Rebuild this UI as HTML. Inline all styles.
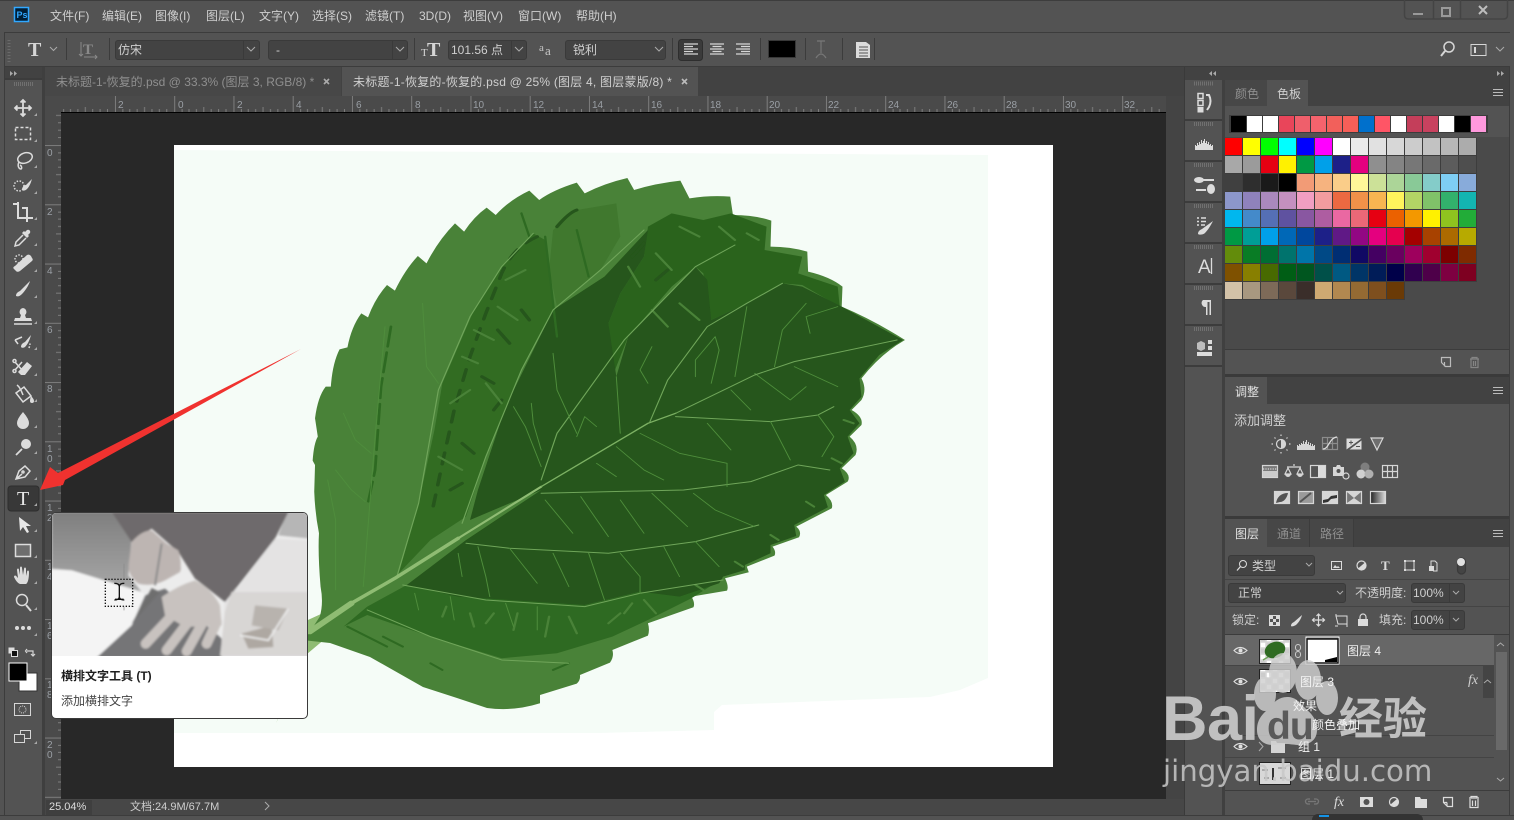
<!DOCTYPE html>
<html><head><meta charset="utf-8"><title>Photoshop</title>
<style>
html,body{margin:0;padding:0;width:1514px;height:820px;overflow:hidden;background:#535353}
.a{position:absolute}
.t{position:absolute;white-space:nowrap;font:12px/14px "Liberation Sans","Noto Sans CJK SC",sans-serif;color:#cfcfcf}
.d{color:#8f8f8f}
.b{position:absolute;box-sizing:border-box;background:#434343;border:1px solid #3a3a3a;border-radius:3px}
svg{position:absolute;left:0;top:0}
#g{position:absolute;left:1225px;top:138px;display:grid;grid-template-columns:repeat(14,18px);grid-auto-rows:18px}
#g i{display:block;box-sizing:border-box;border-right:1px solid #3d3d3d;border-bottom:1px solid #3d3d3d}
#r{position:absolute;left:1229px;top:115px;width:259px;height:18px;background:#3c3c3c;display:flex;padding-left:2px;box-sizing:border-box}
#r i{display:block;width:15px;height:16px;margin:1px 1px 0 0}
#tip{position:absolute;left:51px;top:512px;width:255px;height:205px;background:#fff;border:1px solid #3a3a3a;border-radius:5px;overflow:hidden}
</style></head><body>

<!-- chrome backgrounds -->
<div class="a" style="left:0;top:0;width:1514px;height:1px;background:#3d3d3d"></div>
<div class="a" style="left:4px;top:32px;width:1506px;height:1px;background:#3c3c3c"></div>
<div class="a" style="left:4px;top:66px;width:1506px;height:1px;background:#3c3c3c"></div>
<div class="a" style="left:4px;top:32px;width:1px;height:783px;background:#3c3c3c"></div>
<div class="a" style="left:42px;top:67px;width:3px;height:748px;background:#3f3f3f"></div>
<div class="a" style="left:5px;top:67px;width:37px;height:12px;background:#424242"></div>
<div class="a" style="left:45px;top:67px;width:1139px;height:29px;background:#424242"></div>
<div class="a" style="left:45px;top:67px;width:296px;height:29px;background:#474747"></div>
<div class="a" style="left:342px;top:67px;width:356px;height:29px;background:#535353"></div>
<div class="a" style="left:45px;top:96px;width:1121px;height:16px;background:#4a4a4a"></div>
<div class="a" style="left:45px;top:96px;width:16px;height:703px;background:#4a4a4a"></div>
<div class="a" style="left:61px;top:112px;width:1105px;height:687px;background:#282828"></div>
<div class="a" style="left:61px;top:112px;width:1105px;height:1px;background:#000"></div>
<div class="a" style="left:1166px;top:96px;width:18px;height:703px;background:#444"></div>
<div class="a" style="left:45px;top:799px;width:1139px;height:16px;background:#474747"></div>
<div class="a" style="left:46px;top:800px;width:46px;height:15px;background:#3f3f3f"></div>
<div class="a" style="left:0;top:815px;width:1514px;height:1px;background:#3c3c3c"></div>
<div class="a" style="left:1184px;top:67px;width:1px;height:748px;background:#3a3a3a"></div>
<div class="a" style="left:1185px;top:67px;width:325px;height:13px;background:#424242"></div>
<div class="a" style="left:1222px;top:80px;width:3px;height:735px;background:#404040"></div>
<div class="a" style="left:1509px;top:67px;width:1px;height:748px;background:#3c3c3c"></div>

<!-- panels -->
<div class="a" style="left:1225px;top:80px;width:284px;height:26px;background:#424242"></div>
<div class="a" style="left:1225px;top:80px;width:42px;height:26px;background:#474747"></div>
<div class="a" style="left:1267px;top:80px;width:41px;height:27px;background:#535353"></div>
<div class="a" style="left:1225px;top:106px;width:284px;height:31px;background:#535353"></div>
<div class="a" style="left:1225px;top:137px;width:284px;height:212px;background:#4a4a4a"></div>
<div class="a" style="left:1225px;top:349px;width:284px;height:1px;background:#3c3c3c"></div>
<div class="a" style="left:1225px;top:374px;width:284px;height:3px;background:#3a3a3a"></div>
<div class="a" style="left:1225px;top:377px;width:284px;height:27px;background:#424242"></div>
<div class="a" style="left:1225px;top:377px;width:42px;height:28px;background:#535353"></div>
<div class="a" style="left:1225px;top:516px;width:284px;height:3px;background:#3a3a3a"></div>
<div class="a" style="left:1225px;top:519px;width:284px;height:28px;background:#424242"></div>
<div class="a" style="left:1225px;top:519px;width:42px;height:29px;background:#535353"></div>
<div class="a" style="left:1267px;top:519px;width:86px;height:28px;background:#474747"></div>
<div class="a" style="left:1309px;top:519px;width:1px;height:28px;background:#3c3c3c"></div>
<div class="a" style="left:1353px;top:519px;width:1px;height:28px;background:#3c3c3c"></div>
<div class="a" style="left:1225px;top:579px;width:284px;height:1px;background:#444"></div>
<div class="a" style="left:1225px;top:606px;width:284px;height:1px;background:#444"></div>
<div class="a" style="left:1225px;top:634px;width:284px;height:1px;background:#3c3c3c"></div>
<div class="a" style="left:1225px;top:635px;width:269px;height:30px;background:#676767"></div>
<div class="a" style="left:1225px;top:665px;width:269px;height:1px;background:#444"></div>
<div class="a" style="left:1225px;top:735px;width:269px;height:1px;background:#444"></div>
<div class="a" style="left:1225px;top:757px;width:269px;height:1px;background:#444"></div>
<div class="a" style="left:1225px;top:790px;width:284px;height:1px;background:#3c3c3c"></div>
<div class="a" style="left:1483px;top:666px;width:11px;height:32px;background:#444"></div>
<div class="a" style="left:1496px;top:652px;width:11px;height:98px;background:#696969"></div>
<div class="a" style="left:1312px;top:814px;width:111px;height:6px;background:#333;border-radius:6px 6px 0 0"></div>
<div class="a" style="left:1319px;top:815px;width:10px;height:2px;background:#1593e6"></div>

<!-- document + leaf -->
<div class="a" style="left:174px;top:145px;width:879px;height:622px;background:#fff"></div>
<svg width="1514" height="820" viewBox="0 0 1514 820">
<defs><filter id="lf" x="-5%" y="-5%" width="110%" height="110%"><feGaussianBlur stdDeviation=".5"/></filter></defs>
<polygon fill="#f5fcf7" points="174,150 988,155 988,678 960,690 930,697 850,700 722,705 714,712 714,730 600,733 174,733"/>
<g transform="translate(300 170) scale(.3954 .3333)" filter="url(#lf)">
<path fill="#8fbc73" d="M-60,1660 L20,1350 L130,1290 L150,1320 L70,1400 L20,1450 L-30,1560z"/>
<path fill="#4a8238" d="M20,1395 L50,1340 Q60,1300 52,1250 Q45,1150 48,1090 Q38,1030 36,965 L38,885 L32,872 Q35,820 45,800 L38,745 Q45,680 65,650 L78,650 Q82,580 100,538 L120,532 Q130,470 155,430 L172,442 Q190,385 220,345 L240,362 Q265,300 298,258 L320,280 Q350,210 392,160 L415,185 Q440,140 472,113 L495,135 Q530,90 580,62 L605,90 Q640,60 700,38 L720,70 Q770,40 828,24 L845,60 Q900,40 962,32 L985,85 Q1040,75 1088,80 L1095,135 Q1150,135 1192,152 L1190,230 Q1240,230 1283,245 L1285,305 Q1340,320 1372,350 L1370,410 Q1450,450 1530,510 Q1470,550 1420,625 Q1435,660 1420,690 L1395,720 Q1425,740 1420,765 L1390,800 Q1415,825 1405,855 L1370,895 Q1395,915 1385,935 L1330,975 Q1350,995 1345,1015 L1255,1070 Q1270,1085 1262,1102 L1195,1130 Q1205,1145 1200,1157 L1130,1190 L1135,1207 L1075,1225 Q1085,1250 1080,1262 L990,1280 Q1000,1300 995,1312 L880,1360 Q885,1380 880,1397 L790,1440 Q795,1460 784,1478 L708,1515 Q710,1530 700,1541 L607,1575 L607,1600 Q540,1625 473,1614 L397,1584 L311,1551 L177,1461 L76,1419 L20,1412 Z"/>
<!-- mid tone patches -->
<polygon fill="#326c24" points="250,1210 300,1000 340,780 360,640 440,420 510,290 590,190 620,210 640,420 560,600 470,860 420,1040 330,1110"/>
<polygon fill="#3f782e" points="640,180 700,120 800,100 810,200 760,300 650,410 630,300"/>
<polygon fill="#2a641e" points="880,170 940,130 1020,150 1090,130 1180,170 1175,240 1270,260 1260,310 1360,350 1365,410 1270,345 1220,340 1130,400 1040,450 1020,310 1000,290 940,350 830,500 790,620 780,460 810,370 870,260"/>
<polygon fill="#2f6a22" points="110,1370 170,1310 270,1245 720,1305 860,1265 1070,1225 990,1285 880,1350 790,1400 650,1450 510,1465 330,1400 170,1335"/>
<!-- darkest -->
<polygon fill="#25561a" points="610,960 430,1050 450,960 520,710 640,420 770,320 880,180 870,260 810,370 780,460 800,620 830,500 1000,290 1030,330 1040,450 1130,400 1220,340 1270,350 1370,410 1525,510 1465,555 1415,625 1420,680 1390,720 1415,760 1385,800 1400,850 1365,895 1378,935 1325,975 1335,1012 1250,1065 1255,1098 1190,1125 1190,1150 1125,1185 1125,1200 1070,1220 1060,1240 960,1280 860,1265 720,1305 400,1280 270,1245 420,1110"/>
<!-- texture -->
<g fill="none" stroke="#25561a" stroke-width="9" stroke-linecap="round" stroke-linejoin="round">
<path stroke-dasharray="34 30" d="M600,200 Q540,230 510,310 L470,430 L430,560 L390,720 L360,880 L335,1020"/>
<path d="M700,120 Q680,128 650,170M500,480l30,40M460,620l30,20M410,820l30,30M380,960l30,-20M490,720l20,-30M560,420l20,30M840,260l30,-40M900,330l30,-30"/>
</g>
<g fill="none" stroke="#2f6b22" stroke-width="7" stroke-linecap="round" stroke-linejoin="round"><path stroke-dasharray="60 18" d="M230,470 L205,650 L190,900 L170,1010"/></g>
<g fill="none" stroke="#4a8238" stroke-width="6" stroke-linecap="round">
<path d="M410,560l40,20M440,480l50,30M380,700l50,-40M350,860l60,40M470,640l40,60M500,410l50,40M830,290l30,60M900,250l40,50M960,170l50,30M1060,170l40,40M1130,190l30,20M960,400l50,50M890,420l40,50M520,330l50,-30M900,1330l-30,-40M620,1400l10,-60M700,1390l-20,-50M540,1380l10,-50M440,1370l-10,-40M780,1360l30,-30M820,1330l20,-30M470,1360l20,-30M360,1340l10,-30M1020,1260l-20,-15M1120,1190l-20,-15M1210,1110l-20,-15M1300,1010l-20,-15M1370,880l-25,-15M1400,760l-25,-10"/></g>
<g fill="none" stroke="#2f6b22" stroke-width="6" stroke-linecap="round">
<path d="M620,200l30,300M700,180l30,140M560,130l20,70M120,1370l100,60M210,1400l50,30M330,1480l30,20M640,1500l40,-20"/></g>
<!-- veins -->
<g fill="none" stroke="#6fa55a" stroke-linecap="round" stroke-linejoin="round">
<path stroke-width="3" d="M245,1220 L300,1000 L350,660 L430,440 L510,290 L590,190"/>
<path stroke-width="3" d="M410,1060 L470,860 L560,600 L640,420 L760,300 L870,180"/>
<path stroke-width="3" d="M610,930 L650,790 L820,510 L1000,290 L1100,225"/>
<path stroke-width="3" d="M885,755 L930,630 L1030,470 L1130,400 L1220,340"/>
<path stroke-width="3" d="M950,740 L1190,755 L1310,735 L1350,710"/>
<path stroke-width="3" d="M610,970 L970,960 L1140,935 L1260,885 L1340,900"/>
<path stroke-width="3" d="M420,1120 L530,1135 L780,1150 L1000,1115 L1160,1065"/>
<path stroke-width="3" d="M260,1245 L470,1290 L720,1310 L860,1270 L1070,1230"/>
<path stroke-width="3" d="M170,1320 L330,1400 L510,1470 L680,1480"/>
<g stroke="#4f8d3c" stroke-width="2.500"><path d="M160,1250 L190,800 L215,470 M90,1260 L90,1050 L70,930 M110,730 L140,810 L180,850 M90,900 L130,960 L165,995 M310,400 L320,590 L350,640"/>
<path d="M610,890 L570,770 L540,710 M610,840 L590,760 L585,700 M700,800 L720,740 L750,770 M810,790 L800,620 M640,550 L650,660 L700,790 M880,640 L860,600 L890,530 M1000,620 L1000,570 L1050,500 M1040,640 L1060,540 L1050,500 M1100,620 L1130,410 M1200,590 L1220,480 L1280,400 M1290,490 L1280,440 L1360,410 M1150,610 L1240,690 L1280,650 M1250,590 L1360,650 M1090,660 L1140,720 M1190,755 L1240,870 M1310,735 L1350,800 L1320,860 M1030,760 L1090,840 M860,790 L960,850 L1080,880 L1080,950 M800,830 L870,900 L920,930 M750,880 L800,920 M620,990 L690,1090 M710,980 L780,1100 M810,990 L870,1090 M890,970 L980,1070 M995,970 L1050,1020 L1150,1070"/>
<path d="M450,1130 L470,1220 L480,1280 M530,1135 L600,1240 M640,1150 L680,1250 M730,1150 L770,1290 M810,1150 L860,1220 L860,1270 M920,1130 L960,1220 M1000,1115 L1060,1190 M400,1150 L410,1220 M290,1270 L300,1320 M380,1280 L390,1350 M520,1300 L540,1370 M600,1310 L600,1380"/></g>
<path stroke="#8fbc73" stroke-width="16" d="M25,1385 L130,1300"/>
<path stroke="#8fbc73" stroke-width="10" d="M130,1300 L240,1225 L400,1105"/>
<path stroke="#8fbc73" stroke-width="6" d="M400,1105 L610,950"/>
<path stroke="#7cb064" stroke-width="4" d="M610,950 L880,760 L950,730"/>
<path stroke="#6fa55a" stroke-width="3" d="M950,730 L1150,615 L1250,575 L1510,510"/>
</g>
</g>
</svg>

<!-- tool icons and panel icons -->
<svg width="1514" height="820" viewBox="0 0 1514 820" fill="none" stroke="#d6d6d6" stroke-width="1.5">
<rect x="14.500" y="7.500" width="14" height="14" fill="#001e36" stroke="#31a8ff"/>
<text x="16.500" y="18" font-family="Liberation Sans" font-size="9" font-weight="bold" fill="#31a8ff" stroke="none">Ps</text>
<path stroke="#444" d="M1404.500 0v15q0 4 4 4h95q4 0 4-4v-15M1433.500 0v19M1460.500 0v19"/>
<path stroke="#9a9a9a" stroke-width="2" d="M1413 14h10"/>
<rect x="1442" y="8" width="8" height="8" stroke="#9a9a9a" stroke-width="2"/>
<path stroke="#bdbdbd" stroke-width="2" d="M1479 6l8 8M1487 6l-8 8"/>
<path stroke="#6a6a6a" stroke-width="3" stroke-dasharray="1 2" d="M9 40v22"/>
<path stroke="#3c3c3c" stroke-width="1" d="M66.500 38v22M109.500 38v22M414.500 38v22M672.500 38v22M760.500 38v22M805.500 38v22M842.500 38v22M874.500 38v22"/>
<text x="28" y="56" font-family="Liberation Serif" font-weight="bold" font-size="20" fill="#d6d6d6" stroke="none">T</text>
<path stroke="#aaa" stroke-width="1" d="M50 47l3.500 3.500 3.500-3.500M1496 47l4 4 4-4"/>
<g stroke="#8a8a8a"><text x="83" y="54" font-family="Liberation Serif" font-size="15" font-weight="bold" fill="#8a8a8a" stroke="none">T</text><path stroke-width="1" d="M81 42v14M79 54l2 2 2-2M84 57h13M95 55l2 2-2 2"/></g>
<text x="427" y="56" font-family="Liberation Serif" font-size="20" font-weight="bold" fill="#d6d6d6" stroke="none">T</text>
<text x="421" y="56" font-family="Liberation Serif" font-size="11" fill="#d6d6d6" stroke="none">T</text>
<text x="539" y="51" font-family="Liberation Serif" font-size="11" fill="#c8c8c8" stroke="none">a</text><text x="545" y="55" font-family="Liberation Serif" font-size="13" fill="#c8c8c8" stroke="none">a</text>
<rect x="678.500" y="39.500" width="24" height="21" rx="3" fill="#3b3b3b" stroke="#2e2e2e" stroke-width="1"/>
<path stroke-width="1.200" d="M684 44h14M684 46.500h9M684 49h14M684 51.500h9M684 54h14M710 44h14M712.500 46.500h9M710 49h14M712.500 51.500h9M710 54h14M736 44h14M741 46.500h9M736 49h14M741 51.500h9M736 54h14"/>
<rect x="768.500" y="40.500" width="27" height="17" fill="#000" stroke="#383838" stroke-width="1"/>
<path stroke="#777" stroke-width="1.200" d="M817 41h8M821 41v12M816 58q5-8 10 0"/>
<path fill="#dcdcdc" stroke="none" d="M856 42h10l4 3v13h-14z"/><path stroke="#535353" stroke-width="1" d="M859 47h9M859 50h9M859 53h9M859 56h9"/>
<circle cx="1449" cy="47" r="5" stroke-width="1.500"/><path stroke-width="2" d="M1445 51l-4 5"/>
<rect x="1471" y="44.500" width="15" height="11" stroke-width="1"/><path stroke-width="2" d="M1475 47v6"/>
<g fill="#aaa" stroke="none"><path d="M10 71l3 2.500-3 2.500zM14 71l3 2.500-3 2.500zM1212 71l-3 2.500 3 2.500zM1216 71l-3 2.500 3 2.500zM1497 71l3 2.500-3 2.500zM1501 71l3 2.500-3 2.500z"/></g>
<path stroke="#707070" stroke-width="4" stroke-dasharray="1 1" d="M14 84h20M1194 83.500h20M1194 124h20M1194 165h20M1194 206h20M1194 247h20M1194 288h20M1194 329h20"/>
<path stroke="#3c3c3c" stroke-width="2" d="M1185 120h37M1185 161h37M1185 202h37M1185 243h37M1185 284h37M1185 325h37M1185 366h37M5 79h37"/>
<path stroke="#aaa" stroke-width="1.600" d="M324 79l5 5M329 79l-5 5"/><path stroke="#bbb" stroke-width="1.600" d="M682 79l5 5M687 79l-5 5"/>
<!-- TOOLS -->
<rect x="8" y="486" width="31" height="25" rx="3" fill="#383838" stroke="#2e2e2e" stroke-width="1"/>
<g stroke="#dcdcdc">
<path stroke-width="1.800" d="M23 100v16M15 108h16M20.500 102.500l2.500-2.500 2.500 2.500M20.500 113.500l2.500 2.500 2.500-2.500M17.500 105.500l-2.500 2.500 2.500 2.500M28.500 105.500l2.500 2.500-2.500 2.500"/>
<rect x="15.500" y="127.500" width="15" height="12" stroke-dasharray="3 2"/>
<ellipse cx="25" cy="158" rx="7.500" ry="5" transform="rotate(-20 25 158)"/><path d="M19 162c-2 4 0 7 2 7 1 0 1-3-1-4"/>
<circle cx="19" cy="186" r="5" stroke-dasharray="1.500 1.500"/>
<path fill="#dcdcdc" stroke="none" d="M22 190c0-3 2-5 4-5l6-6c-1 3-2 7-5 10-2 2-4 2-5 1z"/>
<path stroke-width="2" d="M13 204h5v14h13M22 208h5v14M18 204v-2M31 218h2"/>
<path fill="#dcdcdc" stroke="none" d="M25 232l2-2c2-1 4 1 3 3l-2 2 1 1-2 2-5-5 2-2z"/>
<path d="M23 235l-7 7-1 4 4-1 7-7"/>
<circle cx="19" cy="259" r="4" stroke-dasharray="1.500 1.500"/>
<path fill="#dcdcdc" stroke="none" d="M15 266l12-11c2-1 3 0 4 1l1 2c1 1 1 2 0 3l-12 10c-2 1-3 1-4 0l-2-2c-1-1-1-2 1-3z"/>
<path fill="#dcdcdc" stroke="none" d="M16 296c0-3 2-4 4-5l10-10c-1 4-5 10-8 13-2 2-4 3-6 2z"/>
<path fill="#dcdcdc" stroke="none" d="M23 308a4 4 0 0 1 2 7l1 3h5l1 3h-18l1-3h5l1-3a4 4 0 0 1 2-7z"/><path stroke-width="1.400" d="M14 324h18"/>
<path fill="#dcdcdc" stroke="none" d="M21 347c0-3 2-4 4-5l6-7c-1 4-3 9-6 12-2 1-3 1-4 0z"/><path d="M15 340l7-3M15 340l3 4"/><path stroke-dasharray="1.500 1.500" d="M29 348q1-3 1-5"/>
<path d="M15 362l7 8M22 362l-7 8"/><circle cx="14.500" cy="361" r="1.500"/><circle cx="14.500" cy="371" r="1.500"/>
<path fill="#dcdcdc" stroke="none" d="M27 362l5 4-7 9h-4l-3-3z"/>
<path d="M16 393l8-6 7 9-8 6z"/><path d="M17 385q3 2 6 10"/><path fill="#dcdcdc" stroke="none" d="M31 396q3 3 3 5a2 2 0 0 1-4 0q0-2 1-5z"/>
<path fill="#dcdcdc" stroke="none" d="M23 412q6 7 6 11a6 6 0 0 1-12 0q0-4 6-11z"/>
<circle cx="26" cy="444" r="5" fill="#dcdcdc" stroke="none"/><path stroke-width="1.800" d="M22 449l-6 6"/>
<path d="M16 479l3-8 6-5 5 5-5 6zM16 479l6-5"/><circle cx="23" cy="472" r="1"/>
<path fill="#e8e8e8" stroke="none" d="M19 517l1 14 3-4 4 6 2-1-3-6 5 0z"/>
<rect x="15.500" y="544.500" width="15" height="12" fill="#6e6e6e"/>
<path fill="#dcdcdc" stroke="none" d="M20 584c-3-1-5-5-6-7 0-2 2-2 3 0l1 1-1-8c0-2 2-2 2 0l1 5 0-7c0-2 2-2 2 0l1 7 1-6c0-2 2-2 2 0v7l1-4c0-2 2-2 2 0 0 6-1 11-3 12z"/>
<circle cx="22" cy="600" r="5.500"/><path stroke-width="2" d="M26 605l5 6"/>
</g>
<g fill="#dcdcdc" stroke="none"><circle cx="17" cy="628" r="2"/><circle cx="23" cy="628" r="2"/><circle cx="29" cy="628" r="2"/>
<path d="M34 116h3v-3zM34 142h3v-3zM34 168h3v-3zM34 194h3v-3zM34 220h3v-3zM34 246h3v-3zM34 272h3v-3zM34 298h3v-3zM34 324h3v-3zM34 350h3v-3zM34 376h3v-3zM34 402h3v-3zM34 428h3v-3zM34 454h3v-3zM34 480h3v-3zM34 506h3v-3zM34 532h3v-3zM34 558h3v-3zM34 584h3v-3zM34 610h3v-3zM34 636h3v-3zM34 744h3v-3z" fill="#a8a8a8"/></g>
<text x="17" y="505" font-family="Liberation Serif" font-size="20" fill="#e8e8e8" stroke="none">T</text>
<rect x="8.500" y="647.500" width="6" height="6" fill="#ddd" stroke="none"/><rect x="11.500" y="650.500" width="6" height="6" fill="#111" stroke="#ddd" stroke-width="1"/>
<path stroke-width="1.200" d="M27 651h6v5M27 649l-1.500 2 1.500 2M31 654l2 2 2-2"/>
<rect x="19" y="673" width="18" height="18" fill="#fff" stroke="#333" stroke-width="1"/>
<rect x="9" y="663" width="18" height="18" fill="#000" stroke="#fff" stroke-width="1"/>
<rect x="14.500" y="703.500" width="16" height="12" stroke-width="1"/><circle cx="22.500" cy="709.500" r="3.500" stroke-width="1" stroke-dasharray="1 1"/>
<rect x="20.500" y="730.500" width="10" height="8" stroke-width="1"/><rect x="14.500" y="734.500" width="10" height="8" fill="#535353" stroke-width="1"/>
<!-- ruler -->
<defs>
<pattern id="rh" x="55.700" y="96" width="59.250" height="16" patternUnits="userSpaceOnUse"><path stroke="#7d7d7d" stroke-width="1" d="M.5 0v16M7.900 13v3M14.800 13v3M22.200 13v3M29.600 11v5M37 13v3M44.400 13v3M51.800 13v3"/></pattern>
<pattern id="rv" x="45" y="85.800" width="16" height="59.250" patternUnits="userSpaceOnUse"><path stroke="#7d7d7d" stroke-width="1" d="M0 .5h16M13 7.900h3M13 14.800h3M13 22.200h3M11 29.600h5M13 37h3M13 44.400h3M13 51.800h3"/></pattern>
</defs>
<rect x="61" y="96" width="1105" height="16" fill="url(#rh)" stroke="none"/>
<rect x="45" y="112" width="16" height="687" fill="url(#rv)" stroke="none"/>
<g font-family="Liberation Sans" font-size="10" fill="#9a9fa5" stroke="none">
<text x="118" y="108">2</text><text x="178" y="108">0</text><text x="237" y="108">2</text><text x="296" y="108">4</text><text x="356" y="108">6</text><text x="415" y="108">8</text><text x="473" y="108">10</text><text x="533" y="108">12</text><text x="592" y="108">14</text><text x="651" y="108">16</text><text x="710" y="108">18</text><text x="769" y="108">20</text><text x="828" y="108">22</text><text x="888" y="108">24</text><text x="947" y="108">26</text><text x="1006" y="108">28</text><text x="1065" y="108">30</text><text x="1124" y="108">32</text>
<text x="47" y="156">0</text><text x="47" y="215">2</text><text x="47" y="274">4</text><text x="47" y="333">6</text><text x="47" y="392">8</text><text x="47" y="452">1</text><text x="47" y="462">0</text><text x="47" y="511">1</text><text x="47" y="521">2</text><text x="47" y="570">1</text><text x="47" y="580">4</text><text x="47" y="629">1</text><text x="47" y="639">6</text><text x="47" y="688">1</text><text x="47" y="698">8</text><text x="47" y="748">2</text><text x="47" y="758">0</text>
</g>
<!-- dock icons -->
<g stroke="#dcdcdc" stroke-width="1.200">
<rect x="1198" y="93.500" width="5" height="5" stroke-width="1.500"/><rect x="1198" y="100.500" width="5" height="5" stroke-width="1.500"/><rect x="1197.500" y="107" width="6" height="5.500" fill="#dcdcdc" stroke="none"/>
<path stroke-width="2" d="M1206 95h3q3 6 0 12l-2 3"/>
<path stroke-width="1" d="M1195.500 150v-5M1196.500 150v-4M1197.500 150v-7M1198.500 150v-5M1199.500 150v-8M1200.500 150v-6M1201.500 150v-10M1202.500 150v-7M1203.500 150v-9M1204.500 150v-11M1205.500 150v-7M1206.500 150v-9M1207.500 150v-6M1208.500 150v-8M1209.500 150v-5M1210.500 150v-6M1211.500 150v-4M1212.500 150v-5"/>
<path stroke-width="2" d="M1203 180h11M1196 190h10"/><ellipse cx="1199" cy="180" rx="5" ry="3" fill="#dcdcdc" stroke="none"/><ellipse cx="1211" cy="189" rx="4" ry="5" fill="#dcdcdc" stroke="none"/>
<path stroke-width="1.500" d="M1197 218h2M1197 221.500h2M1197 225h2M1201 218h5M1201 221.500h5M1201 225h4"/>
<path fill="#dcdcdc" stroke="none" d="M1198 234c0-3 2-4 4-5l11-8c-2 4-5 9-8 12-2 2-6 2-7 1z"/>
<text x="1198" y="273" font-family="Liberation Sans" font-size="19" fill="#dcdcdc" stroke="none">A</text><path stroke-width="1.300" d="M1211.500 258v16"/>
<path fill="#dcdcdc" stroke="none" d="M1203 300h8v15h-1.500v-13h-2v13h-1.500v-8a4 4 0 0 1-3-7z"/>
<path fill="#bdbdbd" stroke="none" d="M1197 343l4-2 4 2v6l-4 2-4-2z"/><rect x="1208" y="340" width="4" height="4" fill="#dcdcdc" stroke="none"/><rect x="1208" y="346" width="4" height="4" fill="#dcdcdc" stroke="none"/><rect x="1197" y="352" width="15" height="4" fill="#dcdcdc" stroke="none"/>
</g>
<path stroke="#bbb" stroke-width="1" d="M1493 89.500h10M1493 92.500h10M1493 95.500h10M1493 387.500h10M1493 390.500h10M1493 393.500h10M1493 530.500h10M1493 533.500h10M1493 536.500h10"/>
<path stroke="#bbb" stroke-width="1.200" d="M1441.500 357.500h9v9h-5l-4-4zM1444.500 362v4.500"/>
<path stroke="#858585" stroke-width="1.200" d="M1470 359h9M1472 359v-1.500h5v1.500M1471 359.500v8h7v-8M1473.500 361v5M1475.500 361v5"/>
<!-- adjustments -->
<g stroke="#d6d6d6" stroke-width="1.200">
<circle cx="1281" cy="444" r="4.500"/><path fill="#d6d6d6" stroke="none" d="M1281 439.500a4.500 4.500 0 0 1 0 9z"/><path d="M1281 436v-1.500M1281 453.500v-1.500M1273 444h-1.500M1290.500 444h-1.500M1275.500 438.500l-1-1M1287.500 450.500l-1-1M1286.500 438.500l1-1M1275.500 449.500l-1 1"/>
<path stroke-width="1" d="M1297.500 450v-5M1298.500 450v-4M1299.500 450v-6M1300.500 450v-5M1301.500 450v-7M1302.500 450v-6M1303.500 450v-9M1304.500 450v-6M1305.500 450v-8M1306.500 450v-10M1307.500 450v-6M1308.500 450v-8M1309.500 450v-5M1310.500 450v-7M1311.500 450v-4M1312.500 450v-6M1313.500 450v-4M1314.500 450v-5"/>
<rect x="1322.500" y="437.500" width="15" height="12" stroke="#8c8c8c"/><path stroke="#8c8c8c" d="M1327.500 437.500v12M1332.500 437.500v12M1322.500 443.500h15"/><path stroke="#ddd" d="M1323 449c6 0 6-11 14-12"/>
<rect x="1346.500" y="438.500" width="15" height="11" fill="#dcdcdc" stroke="none"/><path fill="#535353" stroke="none" d="M1346.500 449.500l15-11v2l-12 9z"/><path stroke="#535353" stroke-width="1" d="M1349 442.500h4M1351 440.500v4M1356 446.500h4"/>
<path d="M1371 438h12l-6 12z" fill="#6e6e6e"/>
<rect x="1262.500" y="465.500" width="15" height="12" fill="#7a7a7a"/><path stroke-dasharray="1.200 1.200" d="M1263 469h15"/><rect x="1263" y="471" width="15" height="6" fill="#ccc" stroke="none"/>
<path d="M1294 466v-2M1287 467l14 0M1288 468l-3 6h6zM1300 468l-3 6h6z"/><path fill="#d6d6d6" stroke="none" d="M1285 474a3 3 0 0 0 6 0zM1297 474a3 3 0 0 0 6 0z"/>
<rect x="1310.500" y="465.500" width="15" height="12"/><rect x="1318" y="466" width="7" height="11" fill="#dcdcdc" stroke="none"/>
<path fill="#d6d6d6" stroke="none" d="M1333 467h3l1-2h3l1 2h3v9h-11z"/><circle cx="1338.500" cy="471" r="2" fill="#535353" stroke="none"/><circle cx="1346" cy="476" r="3" fill="#535353"/>
<circle cx="1365" cy="467" r="4.500" fill="#7e7e7e" stroke="none"/><circle cx="1361" cy="474" r="4.500" fill="#d0d0d0" stroke="none"/><circle cx="1369" cy="474" r="4.500" fill="#b0b0b0" stroke="none"/>
<rect x="1382.500" y="465.500" width="15" height="12"/><path d="M1387.500 465.500v12M1392.500 465.500v12M1382.500 471.500h15"/>
<rect x="1274.500" y="491.500" width="15" height="12" fill="#d6d6d6"/><path fill="#535353" stroke="none" d="M1276 503c1-6 5-10 12-10-1 5-4 9-8 9z"/>
<rect x="1298.500" y="491.500" width="15" height="12" fill="#9a9a9a"/><path stroke="#555" stroke-width="2" d="M1300 502l11-9"/>
<rect x="1322.500" y="491.500" width="15" height="12" fill="#d6d6d6"/><path fill="#333" stroke="none" d="M1323 500l5-1 3-3 6-1v3l-6 1-3 3-5 1z"/>
<rect x="1346.500" y="491.500" width="15" height="12" fill="#777"/><path fill="#d6d6d6" stroke="none" d="M1347 492h14l-7 6zM1347 503h14l-7-5z"/>
<defs><linearGradient id="gm"><stop offset="0" stop-color="#222"/><stop offset="1" stop-color="#ddd"/></linearGradient></defs>
<rect x="1370.500" y="491.500" width="15" height="12" fill="url(#gm)"/>
</g>
<!-- layer filter icons -->
<g stroke="#dcdcdc" stroke-width="1.200">
<rect x="1331.500" y="561.500" width="10" height="8" stroke-width="1"/><path fill="#dcdcdc" stroke="none" d="M1333 568l2-3 2 2 1-1 2 2z"/>
<circle cx="1361.500" cy="565.500" r="4.500"/><path fill="#dcdcdc" stroke="none" d="M1365 562.500a4.500 4.500 0 0 1-7 6z"/>
<text x="1381" y="570" font-family="Liberation Serif" font-weight="bold" font-size="13" fill="#dcdcdc" stroke="none">T</text>
<rect x="1405" y="561" width="9" height="9" stroke-width="1"/><path fill="#dcdcdc" stroke="none" d="M1404 560h2v2h-2zM1413 560h2v2h-2zM1404 569h2v2h-2zM1413 569h2v2h-2z"/>
<path stroke-width="1" d="M1431 569v-8h4l2 2v8h-4"/><rect x="1429" y="566" width="5" height="5" fill="#dcdcdc" stroke="none"/>
<rect x="1457.500" y="558" width="8" height="16" rx="4" fill="#444" stroke="#3a3a3a"/><circle cx="1461" cy="562" r="4" fill="#e0e0e0" stroke="none"/>
<!-- lock -->
<rect x="1269.500" y="615.500" width="10" height="10" stroke-width="1" fill="#535353"/><path fill="#dcdcdc" stroke="none" d="M1270 616h3v3h-3zM1276 616h3v3h-3zM1273 619h3v3h-3zM1270 622h3v3h-3zM1276 622h3v3h-3z"/>
<path fill="#dcdcdc" stroke="none" d="M1291 626c0-2 1-3 3-4l8-7c-1 4-3 7-6 10-2 1-4 2-5 1z"/>
<path d="M1318.500 614v12M1312.500 620h12M1316.500 616l2-2 2 2M1316.500 624l2 2 2-2M1314.500 618l-2 2 2 2M1322.500 618l2 2-2 2"/>
<path stroke-width="1" d="M1336 616h11v8h-9zM1336 614v2M1347 624v3M1335 626h3"/>
<rect x="1358" y="619" width="10" height="7" fill="#dcdcdc" stroke="none"/><path d="M1360 619v-2a3 3 0 0 1 6 0v2"/>
</g>
<g stroke="#e0e0e0" stroke-width="1.100">
<path d="M1234 650.500q6-6 13 0q-7 6-13 0zM1234 681.500q6-6 13 0q-7 6-13 0zM1234 746.500q6-6 13 0q-7 6-13 0z"/>
<circle cx="1240.500" cy="650.500" r="2" fill="#e0e0e0" stroke="none"/><circle cx="1240.500" cy="681.500" r="2" fill="#e0e0e0" stroke="none"/><circle cx="1240.500" cy="746.500" r="2" fill="#e0e0e0" stroke="none"/>
</g>
<!-- layer thumbs -->
<defs><pattern id="ck" width="12" height="12" patternUnits="userSpaceOnUse"><rect width="12" height="12" fill="#fff"/><rect width="6" height="6" fill="#ccc"/><rect x="6" y="6" width="6" height="6" fill="#ccc"/></pattern></defs>
<rect x="1259.500" y="639.500" width="31" height="24" fill="url(#ck)" stroke="#222" stroke-width="1"/>
<ellipse cx="1275" cy="650" rx="10.500" ry="8" transform="rotate(-20 1275 650)" fill="#2f6b22" stroke="none"/><path d="M1263 660l5-3" stroke="#6fa55a" stroke-width="1.500"/>
<rect x="1306" y="637" width="33" height="27" fill="none" stroke="#fff" stroke-width="1"/>
<rect x="1307" y="639" width="31" height="24" fill="#fff" stroke="#111" stroke-width="1.500"/>
<path d="M1325 660l12-3v5h-12z" fill="#000" stroke="none"/>
<rect x="1295.500" y="644.500" width="5" height="6" rx="2.500" stroke="#ccc" stroke-width="1"/><rect x="1295.500" y="651.500" width="5" height="6" rx="2.500" stroke="#ccc" stroke-width="1"/>
<rect x="1259.500" y="669.500" width="31" height="23" fill="url(#ck)" stroke="#222" stroke-width="1"/>
<rect x="1259.500" y="762.500" width="31" height="22" fill="#d8d8d8" stroke="#222" stroke-width="1"/><path d="M1273 768v12" stroke="#333" stroke-width="2"/><path d="M1262 770h6M1278 768h8M1280 778h6M1264 778h5" stroke="#aaa" stroke-width="2"/>
<path stroke="#aaa" stroke-width="1" d="M1259 742l4 4.500-4 4.500M1484 683l3.500-3 3.500 3M1497 646l3.500-3 3.500 3M1497 778l3.500 3 3.500-3"/>
<path fill="#d4d4d4" stroke="none" d="M1271 741h5l1 2h8v10h-14z"/>
<path stroke="#777" stroke-width="1.300" d="M1311 802h-2a2.500 2.500 0 0 0 0 5h2M1315 802h2a2.500 2.500 0 0 1 0 5h-2M1309 804.500h8" transform="translate(-1 -3)"/>
<rect x="1360" y="797" width="13" height="10" fill="#dcdcdc" stroke="none"/><circle cx="1366.500" cy="802" r="3" fill="#535353" stroke="none"/>
<circle cx="1394" cy="802" r="4.500" stroke="#dcdcdc" stroke-width="1.200"/><path fill="#dcdcdc" stroke="none" d="M1397.500 798.500a4.500 4.500 0 0 1-7 6z"/>
<path fill="#dcdcdc" stroke="none" d="M1415 797h5l1 2h6v9h-12z"/>
<path stroke="#dcdcdc" stroke-width="1.200" d="M1443.500 797.500h9v9h-5l-4-4zM1447 802.500v4M1443.500 802.500h3.500M1469 798h10M1471 798v-1.500h6v1.500M1470 799v8.500h8v-8.500M1472.500 800.500v5.500M1475.500 800.500v5.500"/>
<path stroke="#aaa" stroke-width="1" d="M265 802l4 4-4 4"/>
</svg>

<!-- swatches -->
<div id="r"><i style="background:#000"></i><i style="background:#fff"></i><i style="background:#fff"></i><i style="background:#e9455a"></i><i style="background:#ef5f6b"></i><i style="background:#f5636d"></i><i style="background:#f2605b"></i><i style="background:#f75f58"></i><i style="background:#0070cc"></i><i style="background:#f56"></i><i style="background:#fff"></i><i style="background:#c43e5a"></i><i style="background:#c8425f"></i><i style="background:#fff"></i><i style="background:#000"></i><i style="background:#f9d"></i></div>
<div id="g">
<i style="background:#f00"></i><i style="background:#ff0"></i><i style="background:#0f0"></i><i style="background:#0ff"></i><i style="background:#00f"></i><i style="background:#f0f"></i><i style="background:#fff"></i><i style="background:#ebebeb"></i><i style="background:#e1e1e1"></i><i style="background:#d7d7d7"></i><i style="background:#ccc"></i><i style="background:#c2c2c2"></i><i style="background:#b7b7b7"></i><i style="background:#acacac"></i>
<i style="background:#a8a8a8"></i><i style="background:#9b9b9b"></i><i style="background:#e60012"></i><i style="background:#fff100"></i><i style="background:#009944"></i><i style="background:#00a0e9"></i><i style="background:#1d2088"></i><i style="background:#e4007f"></i><i style="background:#8f8f8f"></i><i style="background:#848484"></i><i style="background:#777"></i><i style="background:#6a6a6a"></i><i style="background:#5c5c5c"></i><i style="background:#4e4e4e"></i>
<i style="background:#404040"></i><i style="background:#2e2e2e"></i><i style="background:#1a1a1a"></i><i style="background:#000"></i><i style="background:#f29b76"></i><i style="background:#f6b37f"></i><i style="background:#facd89"></i><i style="background:#fff799"></i><i style="background:#cce198"></i><i style="background:#acd598"></i><i style="background:#89c997"></i><i style="background:#84ccc9"></i><i style="background:#7ecef4"></i><i style="background:#88abda"></i>
<i style="background:#8c97cb"></i><i style="background:#8f82bc"></i><i style="background:#aa89bd"></i><i style="background:#c490bf"></i><i style="background:#f19ec2"></i><i style="background:#f29c9f"></i><i style="background:#ec6941"></i><i style="background:#f19149"></i><i style="background:#f8b551"></i><i style="background:#fff45c"></i><i style="background:#b3d465"></i><i style="background:#80c269"></i><i style="background:#32b16c"></i><i style="background:#13b5b1"></i>
<i style="background:#00b7ee"></i><i style="background:#448aca"></i><i style="background:#556fb5"></i><i style="background:#5f52a0"></i><i style="background:#8957a1"></i><i style="background:#ae5da1"></i><i style="background:#ea68a2"></i><i style="background:#eb6877"></i><i style="background:#e60012"></i><i style="background:#eb6100"></i><i style="background:#f39800"></i><i style="background:#fff100"></i><i style="background:#8fc31f"></i><i style="background:#22ac38"></i>
<i style="background:#009944"></i><i style="background:#009e96"></i><i style="background:#00a0e9"></i><i style="background:#0068b7"></i><i style="background:#00479d"></i><i style="background:#1d2088"></i><i style="background:#601986"></i><i style="background:#920783"></i><i style="background:#e4007f"></i><i style="background:#e5004f"></i><i style="background:#a40000"></i><i style="background:#a84200"></i><i style="background:#ac6a00"></i><i style="background:#b7aa00"></i>
<i style="background:#638c0b"></i><i style="background:#097c25"></i><i style="background:#006e33"></i><i style="background:#00736d"></i><i style="background:#0075a9"></i><i style="background:#004986"></i><i style="background:#002e73"></i><i style="background:#100964"></i><i style="background:#440062"></i><i style="background:#6a005f"></i><i style="background:#9e005d"></i><i style="background:#a0002f"></i><i style="background:#7d0000"></i><i style="background:#7f2b00"></i>
<i style="background:#7f5100"></i><i style="background:#887f00"></i><i style="background:#486a00"></i><i style="background:#005e15"></i><i style="background:#00561f"></i><i style="background:#005049"></i><i style="background:#005982"></i><i style="background:#003567"></i><i style="background:#001c58"></i><i style="background:#000049"></i><i style="background:#30004f"></i><i style="background:#4e0049"></i><i style="background:#7e0041"></i><i style="background:#7e0021"></i>
<i style="background:#d3c2a8"></i><i style="background:#a89880"></i><i style="background:#7d6a58"></i><i style="background:#5a483c"></i><i style="background:#3a2e2a"></i><i style="background:#cfa972"></i><i style="background:#b28850"></i><i style="background:#946a33"></i><i style="background:#7e4f1e"></i><i style="background:#6a3a06"></i>
</div>

<!-- form boxes -->
<div class="b" style="left:115px;top:40px;width:145px;height:20px"></div><div class="a" style="left:243px;top:40px;width:1px;height:20px;background:#3a3a3a"></div>
<div class="b" style="left:268px;top:40px;width:140px;height:20px"></div><div class="a" style="left:392px;top:40px;width:1px;height:20px;background:#3a3a3a"></div>
<div class="b" style="left:448px;top:40px;width:79px;height:20px"></div><div class="a" style="left:511px;top:40px;width:1px;height:20px;background:#3a3a3a"></div>
<div class="b" style="left:565px;top:40px;width:101px;height:20px"></div>
<div class="b" style="left:1228px;top:555px;width:87px;height:21px"></div>
<div class="b" style="left:1228px;top:583px;width:118px;height:20px"></div>
<div class="b" style="left:1411px;top:583px;width:54px;height:20px"></div><div class="a" style="left:1449px;top:583px;width:1px;height:20px;background:#3a3a3a"></div>
<div class="b" style="left:1411px;top:610px;width:54px;height:20px"></div><div class="a" style="left:1449px;top:610px;width:1px;height:20px;background:#3a3a3a"></div>
<svg width="1514" height="820" fill="none" stroke="#aaa"><path d="M247 47l4 4 4-4M396 47l4 4 4-4M515 47l4 4 4-4M655 47l4 4 4-4M1306 563l3 3 3-3M1337 591l3 3 3-3M1453 591l3 3 3-3M1453 618l3 3 3-3"/><circle cx="1243" cy="564" r="3.500" stroke="#dcdcdc"/><path stroke="#dcdcdc" stroke-width="1.300" d="M1240.500 566.500l-3.500 4"/></svg>

<!-- text -->
<span class="t" style="left:50px;top:9px">文件(F)</span><span class="t" style="left:102px;top:9px">编辑(E)</span><span class="t" style="left:155px;top:9px">图像(I)</span><span class="t" style="left:206px;top:9px">图层(L)</span><span class="t" style="left:259px;top:9px">文字(Y)</span><span class="t" style="left:312px;top:9px">选择(S)</span><span class="t" style="left:365px;top:9px">滤镜(T)</span><span class="t" style="left:419px;top:9px">3D(D)</span><span class="t" style="left:463px;top:9px">视图(V)</span><span class="t" style="left:518px;top:9px">窗口(W)</span><span class="t" style="left:576px;top:9px">帮助(H)</span>
<span class="t" style="left:118px;top:43px">仿宋</span><span class="t" style="left:276px;top:43px">-</span><span class="t" style="left:451px;top:43px">101.56 点</span><span class="t" style="left:573px;top:43px">锐利</span>
<span class="t d" style="left:56px;top:75px">未标题-1-恢复的.psd @ 33.3% (图层 3, RGB/8) *</span>
<span class="t" style="left:353px;top:75px;letter-spacing:.22px">未标题-1-恢复的-恢复的.psd @ 25% (图层 4, 图层蒙版/8) *</span>
<span class="t d" style="left:1235px;top:87px">颜色</span><span class="t" style="left:1277px;top:87px">色板</span>
<span class="t" style="left:1235px;top:385px;color:#e0e0e0">调整</span><span class="t" style="left:1234px;top:414px;font-size:13px">添加调整</span>
<span class="t" style="left:1235px;top:527px;color:#e0e0e0">图层</span><span class="t d" style="left:1277px;top:527px">通道</span><span class="t d" style="left:1320px;top:527px">路径</span>
<span class="t" style="left:1252px;top:559px">类型</span><span class="t" style="left:1238px;top:586px">正常</span><span class="t" style="left:1355px;top:586px">不透明度:</span><span class="t" style="left:1413px;top:586px">100%</span>
<span class="t" style="left:1232px;top:613px">锁定:</span><span class="t" style="left:1379px;top:613px">填充:</span><span class="t" style="left:1413px;top:613px">100%</span>
<span class="t" style="left:1347px;top:644px;color:#eee">图层 4</span>
<span class="t" style="left:1468px;top:673px;font:italic 14px 'Liberation Serif',serif">fx</span>
<span class="t" style="left:1334px;top:795px;font:italic 14px 'Liberation Serif',serif;color:#ddd">fx</span>
<span class="t" style="left:49px;top:800px;font-size:11px;color:#ddd">25.04%</span><span class="t" style="left:130px;top:800px;font-size:11px">文档:24.9M/67.7M</span>

<!-- tooltip -->
<div id="tip">
<svg width="255" height="143" viewBox="1 3 765 429" preserveAspectRatio="none">
<defs><linearGradient id="gr" x1="0" y1="0" x2="0" y2="1"><stop offset="0" stop-color="#7f7f7f"/><stop offset="1" stop-color="#a8a8a8"/></linearGradient><filter id="bl" x="-5%" y="-5%" width="110%" height="110%"><feGaussianBlur stdDeviation="3.500"/></filter></defs>
<rect x="0" y="0" width="780" height="440" fill="#ececec"/>
<g filter="url(#bl)">
<polygon fill="url(#gr)" points="0,0 300,0 240,80 230,190 270,240 60,175 0,170"/>
<polygon fill="#f4f4f4" points="0,175 60,175 270,240 290,260 240,340 135,437 0,437"/>
<polygon fill="#e4e3e3" points="560,225 670,80 775,85 775,437 510,437 520,250"/>
<polygon fill="#b6b6b6" points="705,0 775,0 775,80 680,70"/>
<polygon fill="#6e6b6c" points="180,0 710,0 670,80 560,220 520,270 430,200 380,120 300,50 240,90"/>
<polygon fill="#757577" points="135,437 240,340 280,250 340,230 510,380 510,437"/>
<path fill="#bdb5b2" d="M240,90 Q270,55 300,55 L345,95 L380,115 Q392,150 385,180 L340,205 Q300,225 260,215 Q225,190 232,150z"/>
<path fill="none" stroke="#bdb5b2" stroke-width="26" stroke-linecap="round" d="M345,130 L375,170"/>
<path fill="#c8c2bf" d="M330,255 Q380,220 430,205 Q480,230 505,280 L510,340 L400,345 L340,310z"/>
<path fill="none" stroke="#c8c2bf" stroke-width="30" stroke-linecap="round" d="M385,285 L282,395M425,310 L345,415M460,320 L405,418M495,330 L465,395"/>
<path fill="none" stroke="#8a8a8a" stroke-width="6" d="M330,95 L310,220"/>
<polygon fill="#6e6e6e" points="300,228 325,240 240,335"/>
<polygon fill="#d8d6d4" points="540,240 770,240 770,432 505,432 520,300"/>
<polygon fill="#aea8a2" points="570,365 660,340 665,405 590,410"/>
<polygon fill="#b8b3ae" points="610,280 710,290 680,355 600,340"/>
<path stroke="#eeeeee" stroke-width="5" fill="none" d="M565,370 L650,385 L710,290"/>
</g>
<rect x="161" y="202" width="82" height="81" fill="none" stroke="#111" stroke-width="4" stroke-dasharray="4 5"/>
<path fill="none" stroke="#111" stroke-width="4" d="M188,214q15,0 15,10v30q0,10 -15,10M218,214q-15,0 -15,10M218,264q-15,0 -15,-10M190,262h26"/>
<path stroke="#888" stroke-width="2" d="M217,155V200M217,283V295"/>
</svg>
<span class="t" style="left:9px;top:156px;color:#1e1e1e;font-size:12px;font-weight:bold">横排文字工具 (T)</span>
<span class="t" style="left:9px;top:181px;color:#444;font-size:12px">添加横排文字</span>
</div>

<!-- arrow + watermark -->
<svg width="1514" height="820" viewBox="0 0 1514 820">
<polygon fill="#f0322f" points="301,349 65,480 63,485 40,490 50,467 58,473"/>
<g fill="#d0d0d0" opacity=".82">
<ellipse cx="1283" cy="673" rx="14" ry="20"/><ellipse cx="1308" cy="680" rx="13" ry="20"/><ellipse cx="1265" cy="694" rx="11" ry="17"/><ellipse cx="1327" cy="698" rx="11" ry="17"/>
<path d="M1287 697c8 0 11 4 16 9 6 6 14 11 14 24 0 11-9 15-17 15-6 0-9-1-14-1s-8 1-13 1c-9 0-16-5-16-15 0-12 7-17 13-23 4-5 9-10 17-10z"/>
</g>
</svg>
<span class="t" style="left:1162px;top:684px;font:bold 63px/70px 'Liberation Sans',sans-serif;color:#cacaca;opacity:.92;letter-spacing:-.5px">Bai</span>
<span class="t" style="left:1267px;top:704px;font:bold 39px/46px 'Liberation Sans',sans-serif;color:#5a5a5a;letter-spacing:-1px">du</span>
<span class="t" style="left:1339px;top:693px;font:bold 44px/54px 'Liberation Sans','Noto Sans CJK SC',sans-serif;color:#cacaca;opacity:.92">经验</span>
<span class="t" style="left:1163px;top:752px;font:29.200px/38px 'DejaVu Sans',sans-serif;color:#c8c8c8;opacity:.85">jingyan.baidu.com</span>
<span class="t" style="left:1300px;top:675px;color:#f4f4f4">图层 3</span>
<span class="t" style="left:1293px;top:699px;color:#f4f4f4">效果</span><span class="t" style="left:1312px;top:718px;color:#f4f4f4">颜色叠加</span>
<span class="t" style="left:1298px;top:740px;color:#f4f4f4">组 1</span><span class="t" style="left:1300px;top:767px;color:#f4f4f4">图层 1</span>
</body></html>
